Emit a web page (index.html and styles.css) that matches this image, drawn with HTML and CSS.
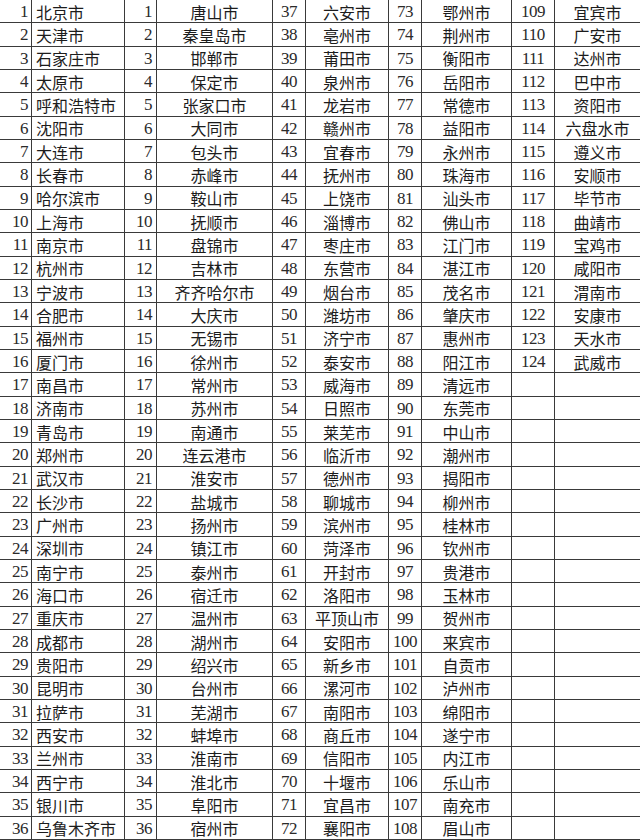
FILE: index.html
```html
<!DOCTYPE html>
<html lang="zh-CN">
<head>
<meta charset="utf-8">
<title>城市名单</title>
<link rel="stylesheet" href="styles.css">
</head>
<body>
<div class="sheet">
<span>1</span><span>北京市</span><span>1</span><span>唐山市</span><span>37</span><span>六安市</span><span>73</span><span>鄂州市</span><span>109</span><span>宜宾市</span>
<span>2</span><span>天津市</span><span>2</span><span>秦皇岛市</span><span>38</span><span>亳州市</span><span>74</span><span>荆州市</span><span>110</span><span>广安市</span>
<span>3</span><span>石家庄市</span><span>3</span><span>邯郸市</span><span>39</span><span>莆田市</span><span>75</span><span>衡阳市</span><span>111</span><span>达州市</span>
<span>4</span><span>太原市</span><span>4</span><span>保定市</span><span>40</span><span>泉州市</span><span>76</span><span>岳阳市</span><span>112</span><span>巴中市</span>
<span>5</span><span>呼和浩特市</span><span>5</span><span>张家口市</span><span>41</span><span>龙岩市</span><span>77</span><span>常德市</span><span>113</span><span>资阳市</span>
<span>6</span><span>沈阳市</span><span>6</span><span>大同市</span><span>42</span><span>赣州市</span><span>78</span><span>益阳市</span><span>114</span><span>六盘水市</span>
<span>7</span><span>大连市</span><span>7</span><span>包头市</span><span>43</span><span>宜春市</span><span>79</span><span>永州市</span><span>115</span><span>遵义市</span>
<span>8</span><span>长春市</span><span>8</span><span>赤峰市</span><span>44</span><span>抚州市</span><span>80</span><span>珠海市</span><span>116</span><span>安顺市</span>
<span>9</span><span>哈尔滨市</span><span>9</span><span>鞍山市</span><span>45</span><span>上饶市</span><span>81</span><span>汕头市</span><span>117</span><span>毕节市</span>
<span>10</span><span>上海市</span><span>10</span><span>抚顺市</span><span>46</span><span>淄博市</span><span>82</span><span>佛山市</span><span>118</span><span>曲靖市</span>
<span>11</span><span>南京市</span><span>11</span><span>盘锦市</span><span>47</span><span>枣庄市</span><span>83</span><span>江门市</span><span>119</span><span>宝鸡市</span>
<span>12</span><span>杭州市</span><span>12</span><span>吉林市</span><span>48</span><span>东营市</span><span>84</span><span>湛江市</span><span>120</span><span>咸阳市</span>
<span>13</span><span>宁波市</span><span>13</span><span>齐齐哈尔市</span><span>49</span><span>烟台市</span><span>85</span><span>茂名市</span><span>121</span><span>渭南市</span>
<span>14</span><span>合肥市</span><span>14</span><span>大庆市</span><span>50</span><span>潍坊市</span><span>86</span><span>肇庆市</span><span>122</span><span>安康市</span>
<span>15</span><span>福州市</span><span>15</span><span>无锡市</span><span>51</span><span>济宁市</span><span>87</span><span>惠州市</span><span>123</span><span>天水市</span>
<span>16</span><span>厦门市</span><span>16</span><span>徐州市</span><span>52</span><span>泰安市</span><span>88</span><span>阳江市</span><span>124</span><span>武威市</span>
<span>17</span><span>南昌市</span><span>17</span><span>常州市</span><span>53</span><span>威海市</span><span>89</span><span>清远市</span><span></span><span></span>
<span>18</span><span>济南市</span><span>18</span><span>苏州市</span><span>54</span><span>日照市</span><span>90</span><span>东莞市</span><span></span><span></span>
<span>19</span><span>青岛市</span><span>19</span><span>南通市</span><span>55</span><span>莱芜市</span><span>91</span><span>中山市</span><span></span><span></span>
<span>20</span><span>郑州市</span><span>20</span><span>连云港市</span><span>56</span><span>临沂市</span><span>92</span><span>潮州市</span><span></span><span></span>
<span>21</span><span>武汉市</span><span>21</span><span>淮安市</span><span>57</span><span>德州市</span><span>93</span><span>揭阳市</span><span></span><span></span>
<span>22</span><span>长沙市</span><span>22</span><span>盐城市</span><span>58</span><span>聊城市</span><span>94</span><span>柳州市</span><span></span><span></span>
<span>23</span><span>广州市</span><span>23</span><span>扬州市</span><span>59</span><span>滨州市</span><span>95</span><span>桂林市</span><span></span><span></span>
<span>24</span><span>深圳市</span><span>24</span><span>镇江市</span><span>60</span><span>菏泽市</span><span>96</span><span>钦州市</span><span></span><span></span>
<span>25</span><span>南宁市</span><span>25</span><span>泰州市</span><span>61</span><span>开封市</span><span>97</span><span>贵港市</span><span></span><span></span>
<span>26</span><span>海口市</span><span>26</span><span>宿迁市</span><span>62</span><span>洛阳市</span><span>98</span><span>玉林市</span><span></span><span></span>
<span>27</span><span>重庆市</span><span>27</span><span>温州市</span><span>63</span><span>平顶山市</span><span>99</span><span>贺州市</span><span></span><span></span>
<span>28</span><span>成都市</span><span>28</span><span>湖州市</span><span>64</span><span>安阳市</span><span>100</span><span>来宾市</span><span></span><span></span>
<span>29</span><span>贵阳市</span><span>29</span><span>绍兴市</span><span>65</span><span>新乡市</span><span>101</span><span>自贡市</span><span></span><span></span>
<span>30</span><span>昆明市</span><span>30</span><span>台州市</span><span>66</span><span>漯河市</span><span>102</span><span>泸州市</span><span></span><span></span>
<span>31</span><span>拉萨市</span><span>31</span><span>芜湖市</span><span>67</span><span>南阳市</span><span>103</span><span>绵阳市</span><span></span><span></span>
<span>32</span><span>西安市</span><span>32</span><span>蚌埠市</span><span>68</span><span>商丘市</span><span>104</span><span>遂宁市</span><span></span><span></span>
<span>33</span><span>兰州市</span><span>33</span><span>淮南市</span><span>69</span><span>信阳市</span><span>105</span><span>内江市</span><span></span><span></span>
<span>34</span><span>西宁市</span><span>34</span><span>淮北市</span><span>70</span><span>十堰市</span><span>106</span><span>乐山市</span><span></span><span></span>
<span>35</span><span>银川市</span><span>35</span><span>阜阳市</span><span>71</span><span>宜昌市</span><span>107</span><span>南充市</span><span></span><span></span>
<span>36</span><span>乌鲁木齐市</span><span>36</span><span>宿州市</span><span>72</span><span>襄阳市</span><span>108</span><span>眉山市</span><span></span><span></span>
</div>
</body>
</html>
```
FILE: styles.css
```css
html, body {
  margin: 0;
  padding: 0;
  background: #fff;
}

.sheet {
  display: grid;
  grid-template-columns: 32px 93px 32px 116px 33px 83px 33px 90px 43px 85px;
  grid-template-rows: repeat(36, 1fr);
  width: 640px;
  height: 840px;
  color: #1c1c1c;
  font-family: "Noto Sans CJK SC", "Liberation Serif", serif;
  font-size: 16px;
}

.sheet > span {
  display: flex;
  align-items: center;
  justify-content: center;
  box-sizing: border-box;
  border-right: 1.5px solid #3a3a3a;
  border-bottom: 1px solid #3a3a3a;
  white-space: nowrap;
  overflow: hidden;
  line-height: 1;
  padding-top: 1px;
}

/* number columns */
.sheet > span:nth-child(10n+1),
.sheet > span:nth-child(10n+3),
.sheet > span:nth-child(10n+5),
.sheet > span:nth-child(10n+7),
.sheet > span:nth-child(10n+9) {
  font-family: "Liberation Serif", "Times New Roman", serif;
  font-size: 17px;
  letter-spacing: -0.5px;
  color: #2a2a2a;
}

.sheet > span:nth-child(10n+1) {
  justify-content: flex-end;
  padding-right: 3px;
}

.sheet > span:nth-child(10n+2) {
  justify-content: flex-start;
  padding-left: 4px;
}

.sheet > span:nth-child(10n+3) {
  justify-content: flex-end;
  padding-right: 4px;
}

.sheet > span:nth-child(10n+10) {
  border-right: none;
}
```
